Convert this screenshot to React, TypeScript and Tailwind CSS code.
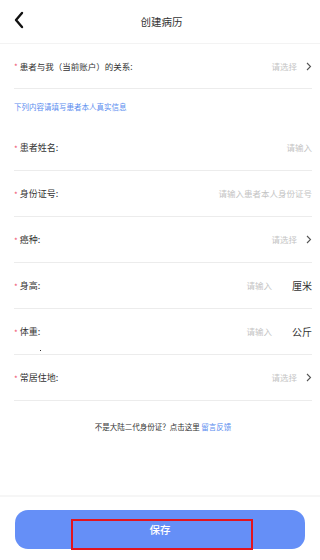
import React from 'react';

const font = { fontFamily: '"Noto Sans CJK SC", "Noto Sans", sans-serif' };

type Row = {
  label: string;
  placeholder: string;
  kind: 'select' | 'input' | 'unit';
  unit?: string;
};

const rows: Row[] = [
  { label: '患者姓名:', placeholder: '请输入', kind: 'input' },
  { label: '身份证号:', placeholder: '请输入患者本人身份证号', kind: 'input' },
  { label: '癌种:', placeholder: '请选择', kind: 'select' },
  { label: '身高:', placeholder: '请输入', kind: 'unit', unit: '厘米' },
  { label: '体重:', placeholder: '请输入', kind: 'unit', unit: '公斤' },
  { label: '常居住地:', placeholder: '请选择', kind: 'select' },
];

function Chevron() {
  return (
    <svg width="6" height="9" viewBox="0 0 6 9" className="ml-[9px]">
      <polyline points="1,1 4.5,4.5 1,8" fill="none" stroke="#555" strokeWidth="1.1" />
    </svg>
  );
}

function FormRow({ row }: { row: Row }) {
  return (
    <div className="flex h-[46px] items-center border-b border-[#ececec]">
      <span className="mr-[2px] pt-[2px] text-[8px] text-[#f0506e]">*</span>
      <span className="text-[9px] text-[#333]">{row.label}</span>
      <div className="ml-auto flex items-center">
        <span className="text-[8.5px] text-[#c4c4c4]">{row.placeholder}</span>
        {row.kind === 'select' && <Chevron />}
        {row.kind === 'unit' && (
          <span className="ml-[20px] text-[10px] text-[#333]">{row.unit}</span>
        )}
      </div>
    </div>
  );
}

export default function App() {
  return (
    <div className="relative flex h-[560px] w-[320px] flex-col overflow-hidden bg-white" style={font}>
      <header className="relative flex h-[44px] shrink-0 items-center justify-center border-b border-[#f3f3f3]">
        <svg width="12" height="18" viewBox="0 0 12 18" className="absolute left-[13px] top-[11px]">
          <polyline points="9,2 3,9 9,16" fill="none" stroke="#111" strokeWidth="2.4" strokeLinecap="round" strokeLinejoin="round" />
        </svg>
        <h1 className="pl-[3px] text-[10.5px] text-[#333]">创建病历</h1>
      </header>

      <div className="pl-[14px] pr-[8px]">
        <div className="flex h-[45px] items-center border-b border-[#ececec]">
          <span className="mr-[2px] pt-[2px] text-[8px] text-[#f0506e]">*</span>
          <span className="text-[8.5px] text-[#333]">患者与我（当前账户）的关系:</span>
          <div className="ml-auto flex items-center">
            <span className="text-[8.5px] text-[#c4c4c4]">请选择</span>
            <Chevron />
          </div>
        </div>

        <div className="flex h-[36px] items-center">
          <span className="text-[7.5px] text-[#5b8def]">下列内容请填写患者本人真实信息</span>
        </div>

        {rows.map((row) => (
          <FormRow key={row.label} row={row} />
        ))}

        <p className="mt-[20px] text-center text-[7.5px] text-[#333]">
          不是大陆二代身份证？点击这里 <span className="text-[#5b8def]">留言反馈</span>
        </p>
      </div>

      <span className="absolute left-[40px] top-[350px] h-[1px] w-[1px] bg-[#333]" />

      <div className="mt-auto h-[65px] shrink-0 border-t-2 border-[#f6f6f6] px-[15px] pt-[13px]">
        <button className="relative flex h-[39px] w-full items-center justify-center rounded-[13px] bg-[#658ff7] pt-[1px] text-[10.5px] font-medium text-white">
          保存
          <span className="absolute left-[56px] top-[9px] h-[31px] w-[182px] border-2 border-[#e3141e]" />
        </button>
      </div>
    </div>
  );
}
